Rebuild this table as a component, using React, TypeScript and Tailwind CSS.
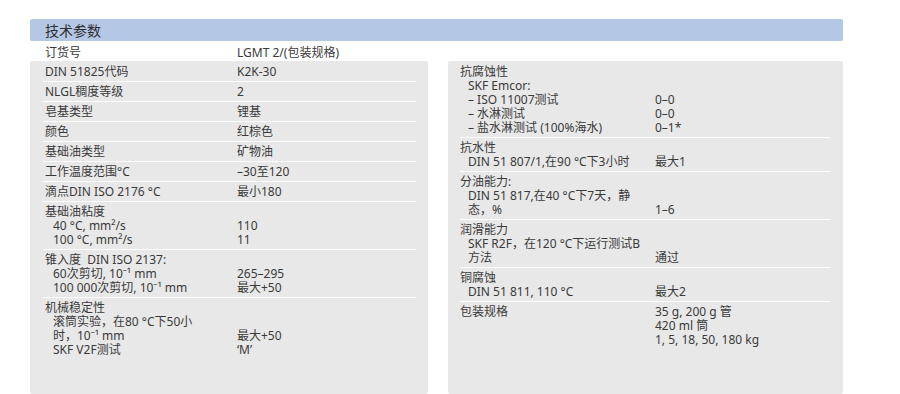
type Line = { label: string; value?: string; sub?: boolean };
type Group = Line[];

const LEFT: Group[] = [
  [{ label: 'DIN 51825代码', value: 'K2K-30' }],
  [{ label: 'NLGL稠度等级', value: '2' }],
  [{ label: '皂基类型', value: '锂基' }],
  [{ label: '颜色', value: '红棕色' }],
  [{ label: '基础油类型', value: '矿物油' }],
  [{ label: '工作温度范围°C', value: '–30至120' }],
  [{ label: '滴点DIN ISO 2176 °C', value: '最小180' }],
  [
    { label: '基础油粘度' },
    { label: '40 °C, mm²/s', value: '110', sub: true },
    { label: '100 °C, mm²/s', value: '11', sub: true },
  ],
  [
    { label: '锥入度  DIN ISO 2137:' },
    { label: '60次剪切, 10⁻¹ mm', value: '265–295', sub: true },
    { label: '100 000次剪切, 10⁻¹ mm', value: '最大+50', sub: true },
  ],
  [
    { label: '机械稳定性' },
    { label: '滚筒实验，在80 °C下50小', sub: true },
    { label: '时，10⁻¹ mm', value: '最大+50', sub: true },
    { label: 'SKF V2F测试', value: '‘M’', sub: true },
  ],
];

const RIGHT: Group[] = [
  [
    { label: '抗腐蚀性' },
    { label: 'SKF Emcor:', sub: true },
    { label: '– ISO 11007测试', value: '0–0', sub: true },
    { label: '– 水淋测试', value: '0–0', sub: true },
    { label: '– 盐水淋测试 (100%海水)', value: '0–1*', sub: true },
  ],
  [
    { label: '抗水性' },
    { label: 'DIN 51 807/1,在90 °C下3小时', value: '最大1', sub: true },
  ],
  [
    { label: '分油能力:' },
    { label: 'DIN 51 817,在40 °C下7天，静', sub: true },
    { label: '态，%', value: '1–6', sub: true },
  ],
  [
    { label: '润滑能力' },
    { label: 'SKF R2F，在120 °C下运行测试B', sub: true },
    { label: '方法', value: '通过', sub: true },
  ],
  [
    { label: '铜腐蚀' },
    { label: 'DIN 51 811, 110 °C', value: '最大2', sub: true },
  ],
  [
    { label: '包装规格', value: '35 g, 200 g 管' },
    { label: '', value: '420 ml 筒' },
    { label: '', value: '1, 5, 18, 50, 180 kg' },
  ],
];

function Row({ line, labelW }: { line: Line; labelW: string }) {
  return (
    <div className="flex leading-[14px] whitespace-pre">
      <div className={labelW + (line.sub ? ' pl-[8px]' : '')}>{line.label}</div>
      <div>{line.value}</div>
    </div>
  );
}

function Panel({ groups, labelW, pad }: { groups: Group[]; labelW: string; pad: string }) {
  return (
    <div className={'flex-1 rounded-[2px] bg-[#e8e8e8] pt-[1px] ' + pad}>
      {groups.map((g, i) => (
        <div
          key={i}
          className={
            'pt-[3px] pb-[2px] ' + (i < groups.length - 1 ? 'border-b border-white' : '')
          }
        >
          {g.map((line, j) => (
            <Row key={j} line={line} labelW={labelW} />
          ))}
        </div>
      ))}
    </div>
  );
}

export default function App() {
  return (
    <div
      className="h-[394px] w-[900px] overflow-hidden bg-white text-[12px] text-[#3a3a3a]"
      style={{ fontFamily: '"Noto Sans", "Noto Sans CJK SC", sans-serif' }}
    >
      <div className="ml-[30px] flex h-full w-[813px] flex-col pt-[19px]">
        {/* 标题栏 */}
        <div className="flex h-[22px] items-center rounded-[2px] bg-[#b4c8e6] pl-[15px] text-[14px] text-[#2f2f2f]">
          技术参数
        </div>

        <div className="flex flex-1 gap-[20px]">
          {/* 左列 */}
          <div className="flex w-[398px] flex-col">
            <div className="flex h-[20px] items-center pl-[15px] pt-[3px] leading-[14px]">
              <div className="w-[192px]">订货号</div>
              <div>LGMT 2/(包装规格)</div>
            </div>
            <Panel groups={LEFT} labelW="w-[192px] shrink-0" pad="pl-[13px] pr-[12px] [&>div]:pl-[2px]" />
          </div>

          {/* 右列 */}
          <div className="flex flex-1 flex-col pt-[20px]">
            <Panel groups={RIGHT} labelW="w-[195px] shrink-0" pad="pl-[12px] pr-[13px]" />
          </div>
        </div>
      </div>
    </div>
  );
}
